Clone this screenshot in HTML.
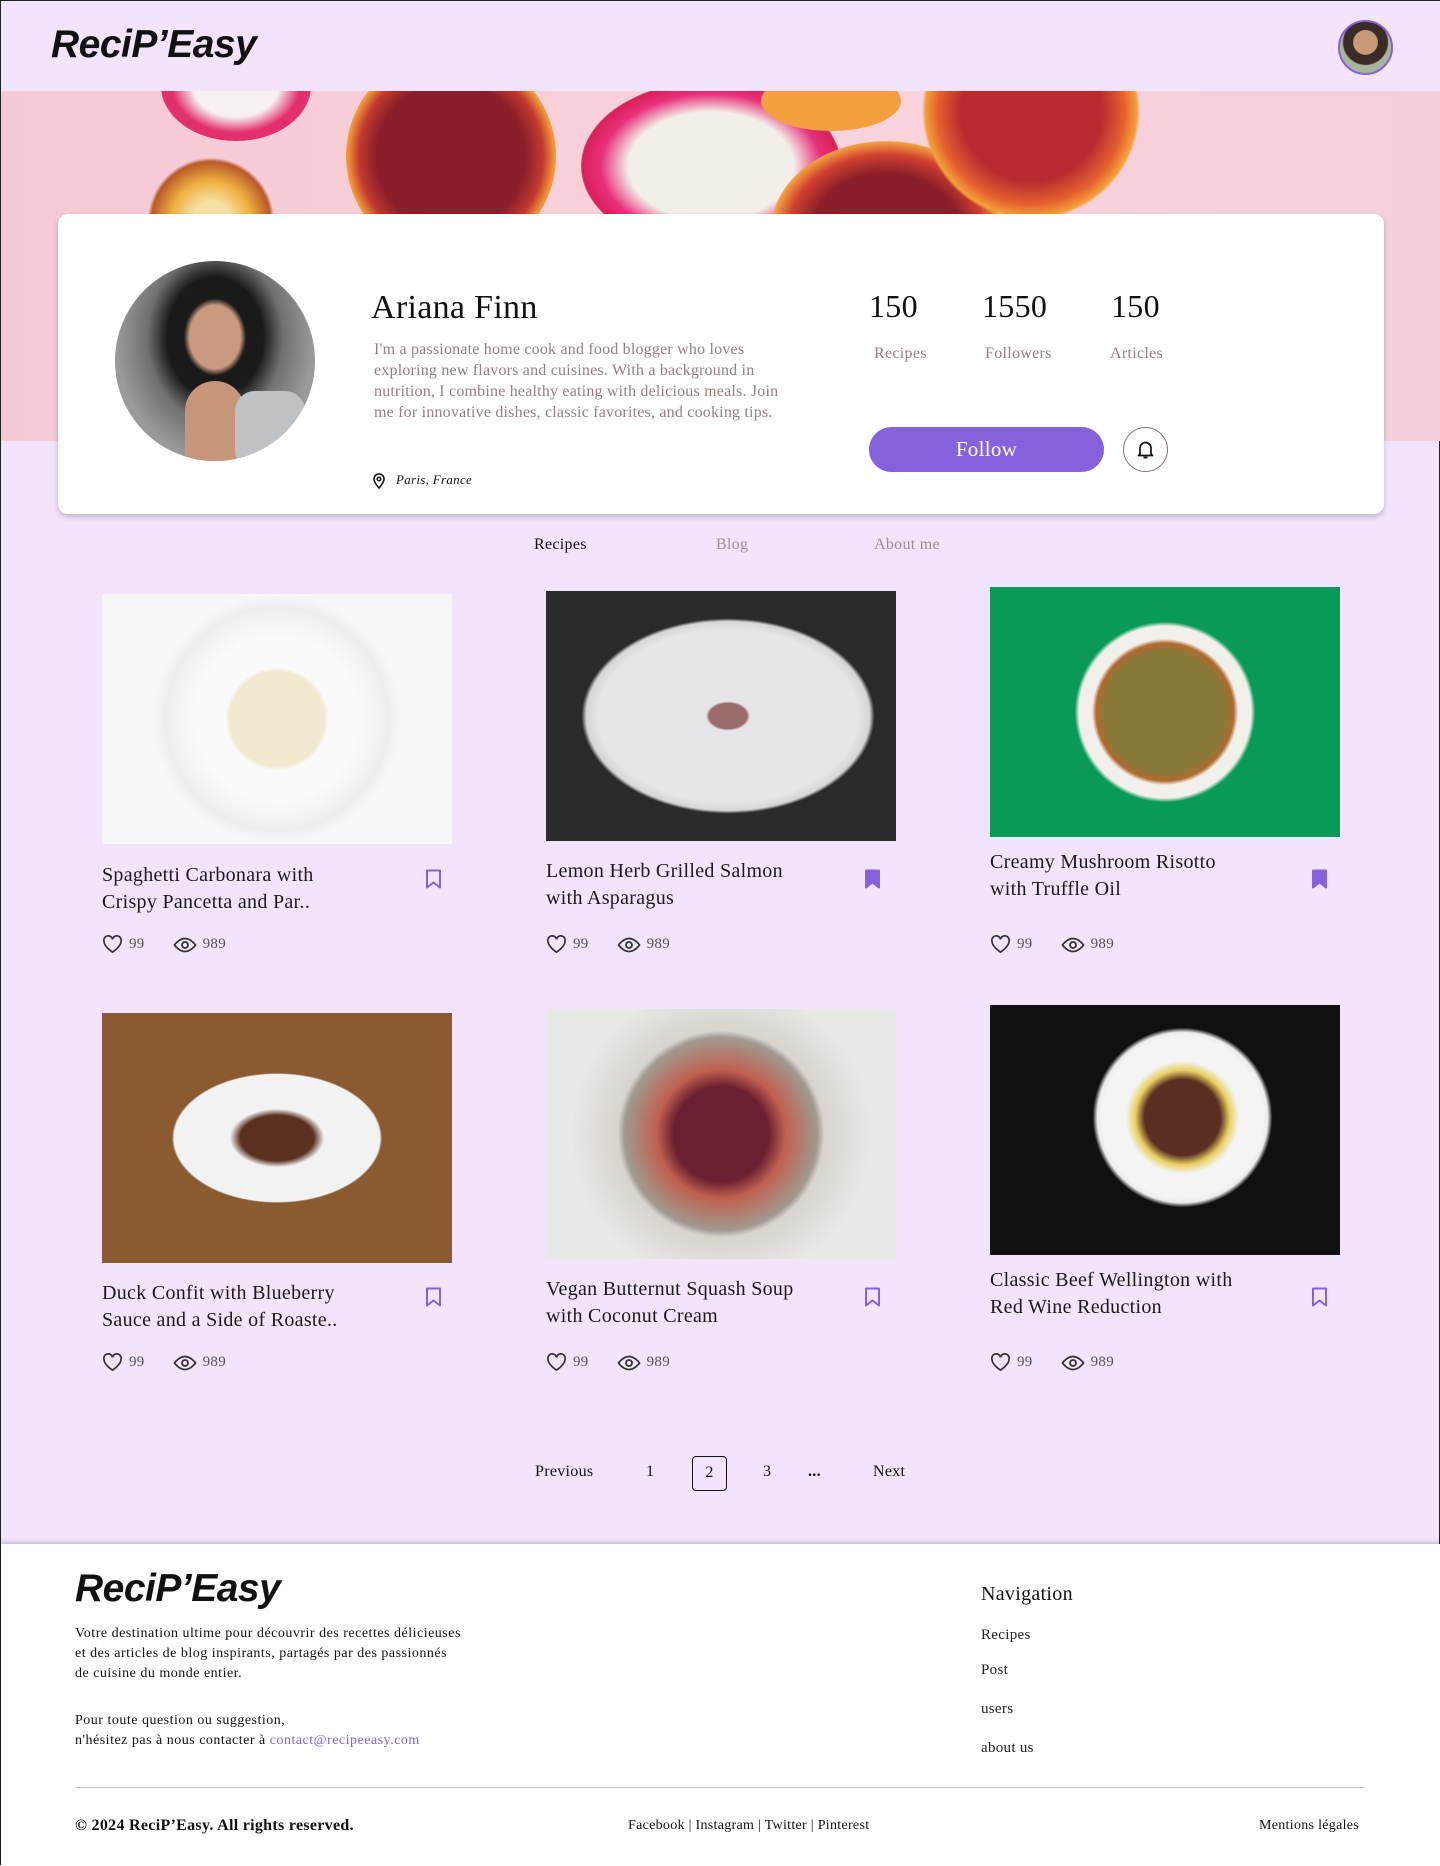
<!DOCTYPE html>
<html><head><meta charset="utf-8"><style>
*{margin:0;padding:0;box-sizing:border-box}
body{width:1440px;height:1865px;position:relative;background:#f2e4fc;font-family:"Liberation Serif",serif;color:#111;overflow:hidden;border:1px solid #222;letter-spacing:0.3px}
.abs{position:absolute}
.logo{font-family:"Liberation Sans",sans-serif;font-weight:900;font-size:39px;letter-spacing:-0.5px;font-style:italic}
.card{position:absolute;width:350px}
.img{position:absolute;left:0;width:350px;height:250px;overflow:hidden}
.title{position:absolute;left:0;width:250px;font-size:20px;line-height:27px;color:#1a1a1a}
.meta{position:absolute;left:0;font-size:15px;color:#555;display:flex;align-items:center;gap:6px}
.tab{position:absolute;top:535px;font-size:16px;color:#a08f8f}
.pg{position:absolute;top:1462px;font-size:16px;color:#111}
.fl{position:absolute;left:980px;font-size:15px;color:#222}
</style></head><body>
<div class="abs" style="left:0;top:0;width:1440px;height:90px;background:#f2e4fc"></div>
<div class="abs logo" style="left:50px;top:22px">ReciP’Easy</div>
<div class="abs" style="left:1337px;top:19px;width:55px;height:55px;border-radius:50%;border:2px solid #8661dc;background:radial-gradient(circle at 50% 40%,#c89a7a 0 30%,#3a2c24 32% 55%,#a7b59a 58%)"></div>

<div class="abs" style="left:0;top:90px;width:1440px;height:350px;background:linear-gradient(90deg,#f6c9d6,#f8d3dc 60%,#f3cfdc);overflow:hidden">
 <div class="abs" style="left:160px;top:-60px;width:150px;height:110px;border-radius:50%;background:radial-gradient(#f7f0f0 40%,#e2306e 60%)"></div>
 <div class="abs" style="left:140px;top:60px;width:140px;height:140px;border-radius:50%;background:radial-gradient(#f4e0a0 20%,#f0b040 40%,#b85a2a 60%,transparent 64%)"></div>
 <div class="abs" style="left:345px;top:-40px;width:210px;height:210px;border-radius:50%;background:radial-gradient(#8a1e2a 50%,#c23a2e 62%,#f29a3a 70%,#f7a838 74%)"></div>
 <div class="abs" style="left:580px;top:-10px;width:260px;height:170px;border-radius:50%;background:radial-gradient(#f2eee8 45%,#e8307a 60%,#d8205a 70%,transparent 72%)"></div>
 <div class="abs" style="left:770px;top:50px;width:230px;height:180px;border-radius:50%;background:radial-gradient(#8a1e2a 45%,#d04030 60%,#f3a040 70%,transparent 72%)"></div>
 <div class="abs" style="left:920px;top:-90px;width:220px;height:220px;border-radius:50%;background:radial-gradient(#b82a30 45%,#e5602e 60%,#f3a038 68%,transparent 70%)"></div>
 <div class="abs" style="left:760px;top:-20px;width:140px;height:60px;border-radius:50%;background:#f2a040"></div>
</div>

<div class="abs" style="left:57px;top:213px;width:1326px;height:300px;background:#fff;border-radius:10px;box-shadow:0 3px 6px rgba(0,0,0,.2)"></div>
<div class="abs" style="left:114px;top:260px;width:200px;height:200px;border-radius:50%;background:radial-gradient(ellipse at 50% 38%,#c99a80 0 18%,#1a1a1a 22% 34%,#707070 48%,#9a9a9a 70%);overflow:hidden">
 <div class="abs" style="left:70px;top:120px;width:60px;height:80px;background:#c7957a;border-radius:30px 30px 0 0"></div>
 <div class="abs" style="left:120px;top:130px;width:70px;height:80px;background:#bfc2c4;border-radius:20px"></div>
</div>
<div class="abs" style="left:370px;top:288px;font-size:34px;color:#111">Ariana Finn</div>
<div class="abs" style="left:373px;top:338px;width:410px;font-size:16px;line-height:21px;color:#957f7f;letter-spacing:0.2px">I'm a passionate home cook and food blogger who loves exploring new flavors and cuisines. With a background in nutrition, I combine healthy eating with delicious meals. Join me for innovative dishes, classic favorites, and cooking tips.</div>
<svg class="abs" style="left:371px;top:472px" width="14" height="16" viewBox="0 0 14 16"><path d="M7 15S2 9.5 2 6a5 5 0 0 1 10 0c0 3.5-5 9-5 9z" fill="none" stroke="#111" stroke-width="1.6"/><circle cx="7" cy="6" r="1.8" fill="none" stroke="#111" stroke-width="1.5"/></svg>
<div class="abs" style="left:395px;top:471px;font-size:13px;font-style:italic">Paris, France</div>

<div class="abs" style="left:868px;top:287px;font-size:32px">150</div>
<div class="abs" style="left:981px;top:287px;font-size:32px">1550</div>
<div class="abs" style="left:1110px;top:287px;font-size:32px">150</div>
<div class="abs" style="left:873px;top:344px;font-size:16px;color:#957f7f">Recipes</div>
<div class="abs" style="left:984px;top:344px;font-size:16px;color:#957f7f">Followers</div>
<div class="abs" style="left:1109px;top:344px;font-size:16px;color:#957f7f">Articles</div>
<div class="abs" style="left:868px;top:426px;width:235px;height:45px;border-radius:23px;background:#8661dc;color:#fff;font-size:21px;text-align:center;line-height:45px">Follow</div>
<div class="abs" style="left:1122px;top:426px;width:45px;height:45px;border-radius:50%;border:1px solid #8a7575"></div>
<svg class="abs" style="left:1135px;top:438px" width="19" height="21" viewBox="0 0 19 21"><path d="M4 15V9a5.5 5.5 0 0 1 11 0v6l1.5 1.5h-14z" fill="none" stroke="#111" stroke-width="1.7" stroke-linejoin="round"/><path d="M7.5 18.5h4" stroke="#111" stroke-width="1.8"/></svg>

<div class="tab" style="left:533px;color:#111">Recipes</div>
<div class="tab" style="left:715px">Blog</div>
<div class="tab" style="left:873px">About me</div>

<div class="card" style="left:101px;top:0">
 <div class="img" style="top:593px;background:radial-gradient(circle at 50% 50%,#f1e9d0 0 22%,#fafafa 24% 38%,#eeeeee 52%,#f7f7f7 58%)"></div>
 <div class="title" style="top:861px">Spaghetti Carbonara with Crispy Pancetta and Par..</div>
</div>
<div class="card" style="left:545px;top:0">
 <div class="img" style="top:590px;background:radial-gradient(ellipse 45% 42% at 52% 50%,#9a6a6a 0 12%,#e6e6e8 14% 82%,#d6d6d8 90%,#2a2a2a 93%)"></div>
 <div class="title" style="top:857px">Lemon Herb Grilled Salmon with Asparagus</div>
</div>
<div class="card" style="left:989px;top:0">
 <div class="img" style="top:586px;background:radial-gradient(circle at 50% 50%,#8a7a3a 0 28%,#b06a30 32%,#f2f0ea 34% 40%,#089a58 42%)"></div>
 <div class="title" style="top:848px">Creamy Mushroom Risotto with Truffle Oil</div>
</div>
<div class="card" style="left:101px;top:0">
 <div class="img" style="top:1012px;background:radial-gradient(ellipse 30% 26% at 50% 50%,#5a3020 0 35%,#f2f2f2 45% 98%,#8a5a30 100%),radial-gradient(circle at 50% 50%,#8a5a30 0 45%,#2e1e14 50%)"></div>
 <div class="title" style="top:1279px">Duck Confit with Blueberry Sauce and a Side of Roaste..</div>
</div>
<div class="card" style="left:545px;top:0">
 <div class="img" style="top:1008px;background:radial-gradient(circle at 50% 50%,#6a2030 0 22%,#c06050 30%,#a09a90 45%,#d8d4ce 48%,#e8e8e6 70%)"></div>
 <div class="title" style="top:1275px">Vegan Butternut Squash Soup with Coconut Cream</div>
</div>
<div class="card" style="left:989px;top:0">
 <div class="img" style="top:1004px;background:radial-gradient(circle at 55% 45%,#5a2e20 0 16%,#e8d060 20%,#f4f4f4 24% 34%,#ececec 36%,#101010 38%)"></div>
 <div class="title" style="top:1266px">Classic Beef Wellington with Red Wine Reduction</div>
</div>

<svg class="abs" style="left:424px;top:868px" width="17" height="20" viewBox="0 0 17 20"><path d="M2 1.5h13v17l-6.5-5-6.5 5z" fill="none" stroke="#8661dc" stroke-width="2" stroke-linejoin="round"/></svg>
<svg class="abs" style="left:863px;top:868px" width="17" height="20" viewBox="0 0 17 20"><path d="M2 1.5h13v17l-6.5-5-6.5 5z" fill="#8661dc" stroke="#8661dc" stroke-width="2" stroke-linejoin="round"/></svg>
<svg class="abs" style="left:1310px;top:868px" width="17" height="20" viewBox="0 0 17 20"><path d="M2 1.5h13v17l-6.5-5-6.5 5z" fill="#8661dc" stroke="#8661dc" stroke-width="2" stroke-linejoin="round"/></svg>
<svg class="abs" style="left:424px;top:1286px" width="17" height="20" viewBox="0 0 17 20"><path d="M2 1.5h13v17l-6.5-5-6.5 5z" fill="none" stroke="#8661dc" stroke-width="2" stroke-linejoin="round"/></svg>
<svg class="abs" style="left:863px;top:1286px" width="17" height="20" viewBox="0 0 17 20"><path d="M2 1.5h13v17l-6.5-5-6.5 5z" fill="none" stroke="#8661dc" stroke-width="2" stroke-linejoin="round"/></svg>
<svg class="abs" style="left:1310px;top:1286px" width="17" height="20" viewBox="0 0 17 20"><path d="M2 1.5h13v17l-6.5-5-6.5 5z" fill="none" stroke="#8661dc" stroke-width="2" stroke-linejoin="round"/></svg>

<div class="meta" style="left:101px;top:934px"><svg width="21" height="19" viewBox="0 0 22 20"><path d="M11 18S2 12.5 2 6.5A4.5 4.5 0 0 1 11 4.5 4.5 4.5 0 0 1 20 6.5C20 12.5 11 18 11 18z" fill="none" stroke="#333" stroke-width="1.8"/></svg>99<span style="width:16px"></span><svg width="24" height="16" viewBox="0 0 24 16"><path d="M1.5 8S6 1.5 12 1.5 22.5 8 22.5 8 18 14.5 12 14.5 1.5 8 1.5 8z" fill="none" stroke="#333" stroke-width="1.8"/><circle cx="12" cy="8" r="3" fill="none" stroke="#333" stroke-width="1.8"/></svg>989</div>
<div class="meta" style="left:545px;top:934px"><svg width="21" height="19" viewBox="0 0 22 20"><path d="M11 18S2 12.5 2 6.5A4.5 4.5 0 0 1 11 4.5 4.5 4.5 0 0 1 20 6.5C20 12.5 11 18 11 18z" fill="none" stroke="#333" stroke-width="1.8"/></svg>99<span style="width:16px"></span><svg width="24" height="16" viewBox="0 0 24 16"><path d="M1.5 8S6 1.5 12 1.5 22.5 8 22.5 8 18 14.5 12 14.5 1.5 8 1.5 8z" fill="none" stroke="#333" stroke-width="1.8"/><circle cx="12" cy="8" r="3" fill="none" stroke="#333" stroke-width="1.8"/></svg>989</div>
<div class="meta" style="left:989px;top:934px"><svg width="21" height="19" viewBox="0 0 22 20"><path d="M11 18S2 12.5 2 6.5A4.5 4.5 0 0 1 11 4.5 4.5 4.5 0 0 1 20 6.5C20 12.5 11 18 11 18z" fill="none" stroke="#333" stroke-width="1.8"/></svg>99<span style="width:16px"></span><svg width="24" height="16" viewBox="0 0 24 16"><path d="M1.5 8S6 1.5 12 1.5 22.5 8 22.5 8 18 14.5 12 14.5 1.5 8 1.5 8z" fill="none" stroke="#333" stroke-width="1.8"/><circle cx="12" cy="8" r="3" fill="none" stroke="#333" stroke-width="1.8"/></svg>989</div>
<div class="meta" style="left:101px;top:1352px"><svg width="21" height="19" viewBox="0 0 22 20"><path d="M11 18S2 12.5 2 6.5A4.5 4.5 0 0 1 11 4.5 4.5 4.5 0 0 1 20 6.5C20 12.5 11 18 11 18z" fill="none" stroke="#333" stroke-width="1.8"/></svg>99<span style="width:16px"></span><svg width="24" height="16" viewBox="0 0 24 16"><path d="M1.5 8S6 1.5 12 1.5 22.5 8 22.5 8 18 14.5 12 14.5 1.5 8 1.5 8z" fill="none" stroke="#333" stroke-width="1.8"/><circle cx="12" cy="8" r="3" fill="none" stroke="#333" stroke-width="1.8"/></svg>989</div>
<div class="meta" style="left:545px;top:1352px"><svg width="21" height="19" viewBox="0 0 22 20"><path d="M11 18S2 12.5 2 6.5A4.5 4.5 0 0 1 11 4.5 4.5 4.5 0 0 1 20 6.5C20 12.5 11 18 11 18z" fill="none" stroke="#333" stroke-width="1.8"/></svg>99<span style="width:16px"></span><svg width="24" height="16" viewBox="0 0 24 16"><path d="M1.5 8S6 1.5 12 1.5 22.5 8 22.5 8 18 14.5 12 14.5 1.5 8 1.5 8z" fill="none" stroke="#333" stroke-width="1.8"/><circle cx="12" cy="8" r="3" fill="none" stroke="#333" stroke-width="1.8"/></svg>989</div>
<div class="meta" style="left:989px;top:1352px"><svg width="21" height="19" viewBox="0 0 22 20"><path d="M11 18S2 12.5 2 6.5A4.5 4.5 0 0 1 11 4.5 4.5 4.5 0 0 1 20 6.5C20 12.5 11 18 11 18z" fill="none" stroke="#333" stroke-width="1.8"/></svg>99<span style="width:16px"></span><svg width="24" height="16" viewBox="0 0 24 16"><path d="M1.5 8S6 1.5 12 1.5 22.5 8 22.5 8 18 14.5 12 14.5 1.5 8 1.5 8z" fill="none" stroke="#333" stroke-width="1.8"/><circle cx="12" cy="8" r="3" fill="none" stroke="#333" stroke-width="1.8"/></svg>989</div>

<div class="pg" style="left:534px">Previous</div>
<div class="pg" style="left:645px">1</div>
<div class="abs" style="left:691px;top:1455px;width:35px;height:35px;border:1.5px solid #111;border-radius:4px;text-align:center;line-height:32px;font-size:16px">2</div>
<div class="pg" style="left:762px">3</div>
<div class="pg" style="left:807px;font-weight:bold">...</div>
<div class="pg" style="left:872px">Next</div>

<div class="abs" style="left:0;top:1543px;width:1440px;height:322px;background:#fff;box-shadow:0 -2px 4px rgba(0,0,0,.18)"></div>
<div class="abs logo" style="left:74px;top:1566px">ReciP’Easy</div>
<div class="abs" style="left:74px;top:1623px;font-size:14px;line-height:20px;color:#111;letter-spacing:0.5px">Votre destination ultime pour découvrir des recettes délicieuses<br>et des articles de blog inspirants, partagés par des passionnés<br>de cuisine du monde entier.</div>
<div class="abs" style="left:74px;top:1710px;font-size:14px;line-height:20px;color:#111;letter-spacing:0.5px">Pour toute question ou suggestion,<br>n'hésitez pas à nous contacter à <span style="color:#8661dc">contact@recipeeasy.com</span></div>
<div class="abs" style="left:980px;top:1582px;font-size:20px;color:#111">Navigation</div>
<div class="fl" style="top:1626px">Recipes</div>
<div class="fl" style="top:1661px">Post</div>
<div class="fl" style="top:1700px">users</div>
<div class="fl" style="top:1739px">about us</div>
<div class="abs" style="left:74px;top:1786px;width:1290px;height:1px;background:#c8c8c8"></div>
<div class="abs" style="left:74px;top:1816px;font-size:16px;font-weight:bold;color:#111">© 2024 ReciP’Easy. All rights reserved.</div>
<div class="abs" style="left:627px;top:1817px;font-size:14px;color:#111">Facebook | Instagram | Twitter | Pinterest</div>
<div class="abs" style="left:1258px;top:1817px;font-size:14px;color:#111">Mentions légales</div>
</body></html>
